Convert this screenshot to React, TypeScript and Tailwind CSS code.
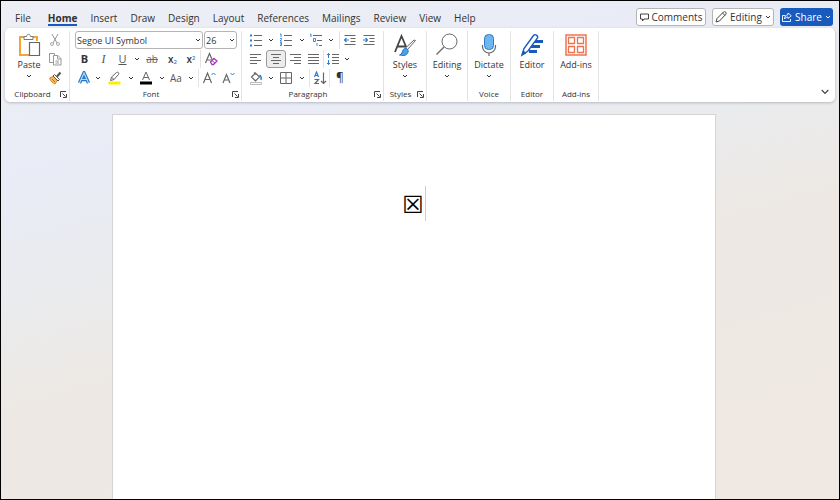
import React from 'react';
import clsx from 'clsx';

const TABS = ['File', 'Home', 'Insert', 'Draw', 'Design', 'Layout', 'References', 'Mailings', 'Review', 'View', 'Help'];

interface IconProps {
  w?: number;
  h?: number;
  className?: string;
  children: React.ReactNode;
}

const Icon: React.FC<IconProps> = ({ w = 14, h = 14, className, children }) => (
  <svg width={w} height={h} viewBox={`0 0 ${w} ${h}`} fill="none" stroke="#666" className={clsx('shrink-0', className)} aria-hidden="true">
    {children}
  </svg>
);

const Chevron: React.FC<{ className?: string }> = ({ className }) => (
  <svg width="6" height="4" viewBox="0 0 6 4" fill="none" stroke="currentColor" className={clsx('shrink-0', className)} aria-hidden="true">
    <path d="M1 1l2 2 2-2" />
  </svg>
);

interface ToolProps {
  label: string;
  className?: string;
  children: React.ReactNode;
}

const Tool: React.FC<ToolProps> = ({ label, className, children }) => (
  <button type="button" aria-label={label} className={clsx('flex h-[18px] shrink-0 items-center justify-center', className)}>
    {children}
  </button>
);

const More: React.FC<{ label: string }> = ({ label }) => (
  <Tool label={label} className="w-[9px]">
    <Chevron />
  </Tool>
);

const Divider: React.FC<{ className?: string }> = ({ className }) => <span className={clsx('h-[18px] w-px shrink-0 bg-[#e3e3e3]', className)} />;

const Row: React.FC<{ children: React.ReactNode }> = ({ children }) => <div className="flex h-[18px] items-center">{children}</div>;

interface GroupProps {
  title?: string;
  launcher?: boolean;
  className?: string;
  bodyClass?: string;
  children: React.ReactNode;
}

const Group: React.FC<GroupProps> = ({ title, launcher, className, bodyClass, children }) => (
  <section className={clsx('flex shrink-0 flex-col border-r border-[#e3e3e3]', className)}>
    <div className={clsx('flex h-[56px] flex-col gap-px', bodyClass)}>{children}</div>
    <div className="flex h-[14px] items-center text-[8px]">
      <span className="flex-1 text-center">{title}</span>
      {launcher && (
        <button type="button" aria-label={`${title} settings`} className="mr-[2px] w-[7px]">
          <Icon w={7} h={7}>
            <path d="M.5 6V.5H6M2.500 2.500l3 3M6.500 3v3.500H3" stroke="#444" />
          </Icon>
        </button>
      )}
    </div>
  </section>
);

interface BigProps {
  label: string;
  menu?: boolean;
  children: React.ReactNode;
}

const BigButton: React.FC<BigProps> = ({ label, menu, children }) => (
  <button type="button" className="flex flex-col items-center pt-[2px] text-[9px] leading-[14px]">
    {children}
    <span className="mt-px">{label}</span>
    {menu && <Chevron className="mt-[2px]" />}
  </button>
);

const Lines: React.FC<{ rows: [number, number][] }> = ({ rows }) => (
  <Icon w={12} h={12}>
    {rows.map(([x, len], i) => (
      <path key={i} d={`M${x} ${i * 3 + 1.5}h${len}`} />
    ))}
  </Icon>
);

interface ComboProps {
  label: string;
  options: string[];
  className?: string;
}

const Combo: React.FC<ComboProps> = ({ label, options, className }) => (
  <label className={clsx('relative flex h-[18px] items-center', className)}>
    <select aria-label={label} className="h-full w-full appearance-none rounded-[3px] border border-[#b5b5b5] bg-white pt-px pl-px text-[9px] leading-[14px]">
      {options.map((o) => (
        <option key={o}>{o}</option>
      ))}
    </select>
    <Chevron className="pointer-events-none absolute right-[2px]" />
  </label>
);

const ClipboardGroup = () => (
  <Group title="Clipboard" launcher className="w-[65px]">
    <div className="flex justify-between pr-[6px] pl-[12px]">
      <BigButton label="Paste" menu>
        <Icon w={24} h={24}>
          <path d="M7 4H3v18h9M16 4h4v4" stroke="#f2a33a" strokeWidth="2" />
          <path d="M7 6.500v-3h2.500C10 .5 13 .5 13.500 3.500H16v3z" fill="#fff" stroke="#777" />
          <path d="M12.500 9.500h10v13h-10z" fill="#fff" stroke="#666" strokeWidth="1.200" />
        </Icon>
      </BigButton>
      <div className="flex flex-col gap-px">
        <Tool label="Cut" className="w-4">
          <Icon>
            <path d="M4 1l5 9M10 1 5 10" stroke="#999" />
            <circle cx="4" cy="11" r="1.500" stroke="#aaa" />
            <circle cx="10" cy="11" r="1.500" stroke="#aaa" />
          </Icon>
        </Tool>
        <Tool label="Copy" className="w-4">
          <Icon>
            <path d="M5 10.500H1.500v-9h5V3" stroke="#999" />
            <path d="M5.500 3.500h4.500l3 3v6.500H5.500zM9.500 3.500V7H13M7.500 9h3.500M7.500 11h3.500" stroke="#999" />
          </Icon>
        </Tool>
        <Tool label="Format Painter" className="w-4">
          <Icon>
            <path d="M1.500 7 6 5l3.500 4L7 13C4.500 12 2.500 10 1.500 7z" fill="#f8b860" stroke="#e08a2c" />
            <path d="m5 5 1.500-1.500 5 5L10 10z" fill="#fff" stroke="#555" />
            <path d="m9 5.500 3.500-4" stroke="#555" strokeWidth="2" />
            <path d="m4 8 3 3" stroke="#c96a12" />
          </Icon>
        </Tool>
      </div>
    </div>
  </Group>
);

const FontGroup = () => (
  <Group title="Font" launcher className="w-[172px]" bodyClass="pl-[5px]">
    <Row>
      <Combo label="Font name" options={['Segoe UI Symbol', 'Calibri', 'Arial']} className="w-[128px]" />
      <Combo label="Font size" options={['26', '28', '36']} className="ml-px w-[33px]" />
    </Row>
    <Row>
      <Tool label="Bold" className="w-[19px] text-[11px] font-bold">B</Tool>
      <Tool label="Italic" className="w-[19px] font-['Liberation_Serif'] text-[12px] text-[#555] italic">I</Tool>
      <Tool label="Underline" className="w-[19px] text-[11px] text-[#555] underline">U</Tool>
      <More label="Underline style" />
      <Tool label="Strikethrough" className="w-[22px] text-[10px] text-[#666] line-through">ab</Tool>
      <Tool label="Subscript" className="w-[19px] text-[10px] font-semibold">
        <span>x<sub className="text-[6px] text-[#2b7cd3]">2</sub></span>
      </Tool>
      <Tool label="Superscript" className="w-[18px] text-[10px] font-semibold">
        <span>x<sup className="text-[6px] text-[#2b7cd3]">2</sup></span>
      </Tool>
      <Divider />
      <Tool label="Clear formatting" className="w-[19px]">
        <Icon>
          <path d="m1.500 11 4-9.500 3 7M3 8h4" strokeWidth="1.200" />
          <path d="m6.500 10 3.500-3.500 3 2.500-3.500 3.500H8z" fill="#fff" stroke="#a33bb5" strokeWidth="1.300" />
          <path d="m8 8.500 3 2.500" stroke="#a33bb5" />
        </Icon>
      </Tool>
    </Row>
    <Row>
      <Tool label="Text effects" className="w-[18px]">
        <Icon>
          <path d="m2.500 12 4.500-10L11.500 12M4.500 8.500h5" stroke="#2276c9" strokeWidth="3.400" />
          <path d="m2.500 12 4.500-10L11.500 12M4.500 8.500h5" stroke="#b5dbf7" strokeWidth="1.200" />
        </Icon>
      </Tool>
      <More label="Text effect list" />
      <Tool label="Highlight" className="w-[24px]">
        <Icon>
          <path d="M1.500 10.500h12v3h-12z" fill="#ffee00" stroke="none" />
          <path d="m4.500 6 5-4.500c1.500-1 3 .5 2 2l-4.500 5zM4.500 6l-1 3.500 3.500-1" />
        </Icon>
      </Tool>
      <More label="Highlight colours" />
      <Tool label="Font colour" className="w-[22px]">
        <Icon>
          <path d="M1 10.500h12v3H1z" fill="#000" stroke="none" />
          <path d="m3.500 9 3.500-8 3.500 8M4.500 6.500h5" />
        </Icon>
      </Tool>
      <More label="Font colours" />
      <Tool label="Change case" className="w-[20px] text-[10px] text-[#555]">Aa</Tool>
      <More label="Case list" />
      <Divider className="ml-[3px]" />
      <Tool label="Grow font" className="w-[20px]">
        <Icon>
          <path d="m1.500 12 4-10 4 10M3 8.500h5" strokeWidth="1.200" />
          <path d="m9.500 4 2-2 2 2" stroke="#2b7cd3" />
        </Icon>
      </Tool>
      <Tool label="Shrink font" className="w-[18px]">
        <Icon>
          <path d="m2 12 3.500-8.500L9 12M3.200 9h4.600" strokeWidth="1.200" />
          <path d="m9.500 2 2 2 2-2" stroke="#2b7cd3" />
        </Icon>
      </Tool>
    </Row>
  </Group>
);

const ParagraphGroup = () => (
  <Group title="Paragraph" launcher className="w-[142px]" bodyClass="pl-[4px]">
    <Row>
      <Tool label="Bullets" className="w-[20px]">
        <Icon>
          <path d="M5 2.500h8M5 7.500h8M5 12.500h8" />
          <path d="M1 2.500h2M1 7.500h2M1 12.500h2" stroke="#2b7cd3" strokeWidth="2" />
        </Icon>
      </Tool>
      <More label="Bullet library" />
      <Tool label="Numbering" className="w-[22px]">
        <Icon>
          <path d="M5 2.500h8M5 7.500h8M5 12.500h8" />
          <path d="M1 1h1v3M1 5.500h1.500v1L1 8h2M1 9.500h1.500v3H1M1 11h1.500" stroke="#2b7cd3" strokeWidth=".9" />
        </Icon>
      </Tool>
      <More label="Numbering library" />
      <Tool label="Multilevel list" className="w-[20px]">
        <Icon>
          <path d="M4 2.500h9M8 7.500h5M10 12.500h3" />
          <path d="M1 1h1v3M6.500 5.500h-2v3h2v-3M8 10v3" stroke="#2b7cd3" strokeWidth=".9" />
        </Icon>
      </Tool>
      <More label="List library" />
      <Divider className="ml-[4px]" />
      <Tool label="Decrease indent" className="w-[20px]">
        <Icon>
          <path d="M1.500 2.500h11M7.500 5.500h5M7.500 8.500h5M1.500 11.500h11" />
          <path d="M6 7H1.500m2-2-2 2 2 2" stroke="#2b7cd3" strokeWidth="1.200" />
        </Icon>
      </Tool>
      <Tool label="Increase indent" className="w-[18px]">
        <Icon>
          <path d="M1.500 2.500h11M7.500 5.500h5M7.500 8.500h5M1.500 11.500h11" />
          <path d="M1 7h4.500m-2-2 2 2-2 2" stroke="#2b7cd3" strokeWidth="1.200" />
        </Icon>
      </Tool>
    </Row>
    <Row>
      <Tool label="Align left" className="w-[20px]"><Lines rows={[[0, 11], [0, 7], [0, 11], [0, 7]]} /></Tool>
      <Tool label="Center" className="w-[20px] rounded-[3px] border border-[#999] bg-[#ececec]"><Lines rows={[[1, 10], [3, 6], [1, 10], [3, 6]]} /></Tool>
      <Tool label="Align right" className="w-[19px]"><Lines rows={[[0, 11], [4, 7], [0, 11], [4, 7]]} /></Tool>
      <Tool label="Justify" className="w-[18px]"><Lines rows={[[0, 11], [0, 11], [0, 11], [0, 11]]} /></Tool>
      <Divider />
      <Tool label="Line spacing" className="w-[18px]">
        <Icon>
          <path d="M6 2.500h7M6 5.500h7M6 8.500h7M6 11.500h7" />
          <path d="M2.500 1.500v4.500M1 3l1.500-1.500L4 3M2.500 8v4.500M1 11l1.500 1.500L4 11" stroke="#2b7cd3" />
        </Icon>
      </Tool>
      <More label="Spacing list" />
    </Row>
    <Row>
      <Tool label="Shading" className="w-[20px]">
        <Icon>
          <path d="m2.500 6 4-4 4 4-4 4zM5 1.500l2 2" strokeWidth="1.200" />
          <path d="M10.500 4c1.500 1 2 3 1.500 5" stroke="#2b7cd3" strokeWidth="1.400" />
          <path d="M1.500 11.500h11v2h-11z" stroke="#bbb" />
        </Icon>
      </Tool>
      <More label="Shading colours" />
      <Tool label="Borders" className="w-[22px]">
        <Icon>
          <path d="M1.500 1.500h11v11h-11zM7 1.500v11M1.500 7h11" />
        </Icon>
      </Tool>
      <More label="Border list" />
      <Divider className="ml-[3px]" />
      <Tool label="Sort" className="w-[19px]">
        <Icon>
          <path d="m1.500 6 2-5 2 5M2.300 4.500h2.400" stroke="#2b7cd3" strokeWidth="1.200" />
          <path d="M1.500 8.500h4L2 12.500h4M10.500 1.500v11M8 10l2.500 2.500L13 10" strokeWidth="1.200" />
        </Icon>
      </Tool>
      <Divider />
      <Tool label="Show marks" className="w-[20px] text-[12px]">¶</Tool>
    </Row>
  </Group>
);

const Ribbon = () => (
  <div className="mx-[4px] flex rounded-[5px] bg-white pt-[3px] pb-px shadow-[0_1px_3px_rgba(0,0,0,0.22)]">
    <ClipboardGroup />
    <FontGroup />
    <ParagraphGroup />
    <Group title="Styles" launcher className="w-[43px]">
      <BigButton label="Styles" menu>
        <Icon w={24} h={24}>
          <path d="m2 19 6.500-16L14 16M4.500 13.500h8" stroke="#444" strokeWidth="1.800" />
          <path d="m22.500 7.500-8 9-2-1.500 8.500-8z" fill="#fff" stroke="#666" />
          <path d="M6.500 22c2.500-.5 2.500-3 3.500-5s4-2 5 0-1 5-4 5.500z" fill="#4ba0e8" stroke="#2276c9" />
        </Icon>
      </BigButton>
    </Group>
    <Group className="w-[41px]">
      <BigButton label="Editing" menu>
        <Icon w={24} h={24}>
          <circle cx="14.500" cy="8.500" r="7.500" />
          <path d="M9 14 1.500 21.500" strokeWidth="1.200" />
        </Icon>
      </BigButton>
    </Group>
    <Group title="Voice" className="w-[43px]">
      <BigButton label="Dictate" menu>
        <Icon w={24} h={24}>
          <rect x="7.500" y="1.500" width="9" height="15" rx="4" fill="#6fb5ee" stroke="#2e7cc7" />
          <path d="M5.500 12v1.500a6.500 6.500 0 0 0 13 0V12M12 20v3" strokeWidth="1.200" />
        </Icon>
      </BigButton>
    </Group>
    <Group title="Editor" className="w-[43px]">
      <BigButton label="Editor">
        <Icon w={24} h={24}>
          <path d="M13 8.500h10M11 13.500h9M9 18.500h8" stroke="#185abd" strokeWidth="3" />
          <path d="M2 22 4 15.500 13.500 2.500c1.500-2 5 0 4 2.500L8 18z" fill="#fff" stroke="#185abd" strokeWidth="1.400" />
          <path d="m2 22 1.200-4 2.800 2z" fill="#185abd" stroke="#185abd" />
        </Icon>
      </BigButton>
    </Group>
    <Group title="Add-ins" className="w-[45px]">
      <BigButton label="Add-ins">
        <Icon w={24} h={24}>
          <path d="M2 2h20v20H2z" stroke="#ef7350" strokeWidth="1.500" />
          <path d="M4.500 4.500h6v6h-6zM13.500 4.500h6v6h-6zM4.500 13.500h6v6h-6zM13.500 13.500h6v6h-6z" stroke="#ef7350" strokeWidth="1.300" />
        </Icon>
      </BigButton>
    </Group>
    <button type="button" aria-label="Collapse ribbon" className="mt-auto mr-[6px] mb-[6px] ml-auto">
      <Icon w={8} h={6}>
        <path d="m.7 1 3.300 3.300L7.300 1" stroke="#444" strokeWidth="1.200" />
      </Icon>
    </button>
  </div>
);

const Header = () => (
  <header className="flex h-[27px] items-start pr-[6px] pl-[14px]">
    <nav className="flex gap-[13px] pt-[8px]">
      {TABS.map((t) => (
        <a
          key={t}
          href="#"
          className={clsx('h-[17px] text-[10px] leading-[18px]', t === 'File' && 'mr-1', t === 'Home' && 'border-b-2 border-[#185abd] font-bold')}
        >
          {t}
        </a>
      ))}
    </nav>
    <div className="ml-auto flex gap-[6px] pt-[7px] text-[10px]">
      <button type="button" className="flex h-[18px] w-[70px] items-center justify-center gap-[3px] rounded-[3px] border border-[#b5b5b5] bg-white">
        <Icon w={9} h={9}>
          <path d="M.5 1h8v5H4L2.500 8V6h-2z" stroke="#444" />
        </Icon>
        Comments
      </button>
      <button type="button" className="flex h-[18px] w-[62px] items-center justify-center gap-[3px] rounded-[3px] border border-[#b5b5b5] bg-white">
        <Icon w={12} h={12}>
          <path d="m1 11 1-3.500L8.500 1C10-.2 12 1.800 10.800 3.300L4.500 10zM7.500 2l2.500 2.500" stroke="#444" />
        </Icon>
        Editing
        <Chevron />
      </button>
      <button type="button" className="flex h-[18px] w-[53px] items-center justify-center gap-[3px] rounded-[3px] bg-[#185abd] text-white">
        <Icon w={10} h={10}>
          <path d="M3.500 3.500h-3v6h8V7M6 1l3.300 2.800L6 6.500V5C4.500 5 3.500 5.500 2.500 7c0-2.500 1.500-4 3.500-4.300z" stroke="#fff" strokeWidth=".9" />
        </Icon>
        Share
        <Chevron />
      </button>
    </div>
  </header>
);

export default function App() {
  return (
    <div className="flex min-h-screen flex-col border border-black bg-[linear-gradient(165deg,#eeeff5_0%,#e9ecf6_26%,#eaebed_43%,#ede8e3_58%,#f0e9e3_100%)] font-['Open_Sans','Noto_Sans',sans-serif] text-[#333]">
      <Header />
      <Ribbon />
      <main className="flex flex-1 pt-[12px] pr-[123px] pl-[111px]">
        <article className="flex flex-1 items-start justify-center border border-b-0 border-[#d4d4d4] bg-white pt-[71px]">
          <p className="flex h-[35px] items-center border-r border-[#ccc] pt-[2px] pr-px font-['DejaVu_Sans'] text-[24px] text-black">☒</p>
        </article>
      </main>
    </div>
  );
}
